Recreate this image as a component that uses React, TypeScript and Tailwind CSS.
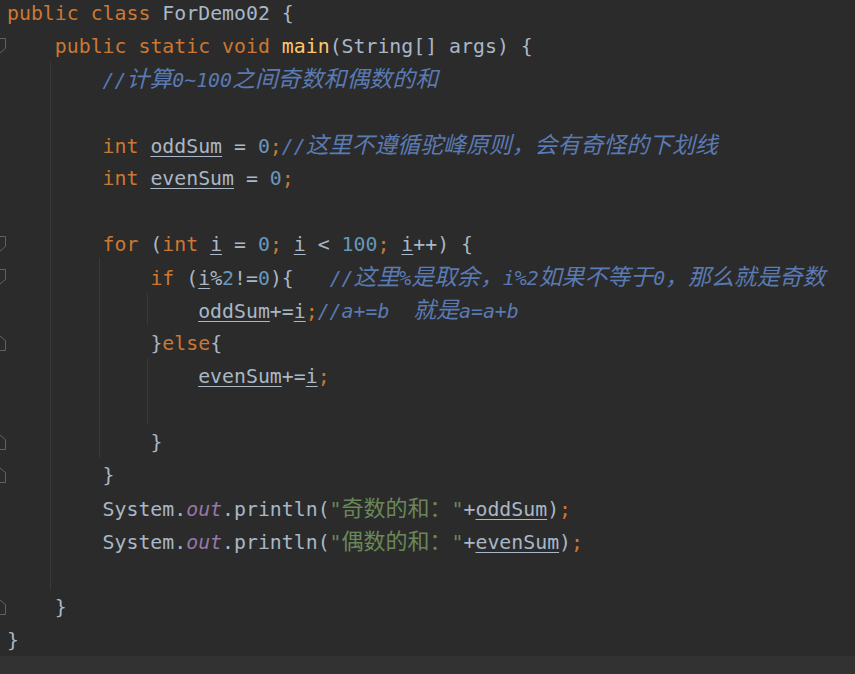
import React from "react";

type Tok = [string, string];

const CJK = /([\u3000-\u303f\u4e00-\u9fff\uff00-\uffef]+)/;

const cls: Record<string, string> = {
  k: "text-[#CC7832]",
  p: "text-[#A9B7C6]",
  n: "text-[#6897BB]",
  c: "text-[#5a7ab3] italic",
  s: "text-[#6A8759]",
  m: "text-[#FFC66D]",
  f: "text-[#9876AA] italic",
  u: "text-[#A9B7C6] underline decoration-[#A9B7C6] underline-offset-[3px] decoration-1",
};

function Run({ type, text }: { type: string; text: string }) {
  const parts = text.split(CJK).filter((x) => x.length > 0);
  return (
    <span className={cls[type]}>
      {parts.map((part, i) =>
        CJK.test(part) ? (
          <span
            key={i}
            className={
              type === "s"
                ? "font-['Noto_Sans_CJK_SC',sans-serif] text-[22px]"
                : "font-['Noto_Sans_CJK_SC',sans-serif] text-[22.9px]"
            }
          >
            {part}
          </span>
        ) : (
          <span key={i}>{part}</span>
        )
      )}
    </span>
  );
}

const ind = (n: number): Tok => ["p", " ".repeat(n)];

const lines: Tok[][] = [
  [["k", "public"], ["p", " "], ["k", "class"], ["p", " ForDemo02 {"]],
  [ind(4), ["k", "public"], ["p", " "], ["k", "static"], ["p", " "], ["k", "void"], ["p", " "], ["m", "main"], ["p", "(String[] args) {"]],
  [ind(8), ["c", "//计算0~100之间奇数和偶数的和"]],
  [],
  [ind(8), ["k", "int"], ["p", " "], ["u", "oddSum"], ["p", " = "], ["n", "0"], ["k", ";"], ["c", "//这里不遵循驼峰原则，会有奇怪的下划线"]],
  [ind(8), ["k", "int"], ["p", " "], ["u", "evenSum"], ["p", " = "], ["n", "0"], ["k", ";"]],
  [],
  [ind(8), ["k", "for"], ["p", " ("], ["k", "int"], ["p", " "], ["u", "i"], ["p", " = "], ["n", "0"], ["k", ";"], ["p", " "], ["u", "i"], ["p", " < "], ["n", "100"], ["k", ";"], ["p", " "], ["u", "i"], ["p", "++) {"]],
  [ind(12), ["k", "if"], ["p", " ("], ["u", "i"], ["p", "%"], ["n", "2"], ["p", "!="], ["n", "0"], ["p", "){   "], ["c", "//这里%是取余，i%2如果不等于0，那么就是奇数"]],
  [ind(16), ["u", "oddSum"], ["p", "+="], ["u", "i"], ["k", ";"], ["c", "//a+=b  就是a=a+b"]],
  [ind(12), ["p", "}"], ["k", "else"], ["p", "{"]],
  [ind(16), ["u", "evenSum"], ["p", "+="], ["u", "i"], ["k", ";"]],
  [],
  [ind(12), ["p", "}"]],
  [ind(8), ["p", "}"]],
  [ind(8), ["p", "System."], ["f", "out"], ["p", ".println("], ["s", "\"奇数的和：\""], ["p", "+"], ["u", "oddSum"], ["p", ")"], ["k", ";"]],
  [ind(8), ["p", "System."], ["f", "out"], ["p", ".println("], ["s", "\"偶数的和：\""], ["p", "+"], ["u", "evenSum"], ["p", ")"], ["k", ";"]],
  [],
  [ind(4), ["p", "}"]],
  [["p", "}"]],
];

// fold markers: line index (0-based) -> "open" | "close"
const folds: Record<number, "open" | "close"> = {
  1: "open",
  7: "open",
  8: "open",
  10: "close",
  13: "close",
  14: "close",
  18: "close",
};

function FoldMark({ kind }: { kind: "open" | "close" }) {
  return (
    <svg
      width="12"
      height="16"
      viewBox="0 0 12 16"
      className="absolute left-[-6px] top-[8px]"
      fill="none"
      stroke="#5f6162"
      strokeWidth="1"
    >
      {kind === "open" ? (
        <path d="M0.5 0.5 H11.5 V10.5 L6 15 L0.5 10.5 Z" />
      ) : (
        <path d="M0.5 15.5 H11.5 V5.5 L6 1 L0.5 5.5 Z" />
      )}
    </svg>
  );
}

export default function App() {
  return (
    <div className="relative w-[855px] h-[674px] overflow-hidden bg-[#2b2b2b] flex flex-col">
      <div className="relative flex-1 overflow-hidden">
        {/* indent guides (overlay decorations) */}
        <div className="absolute left-[50px] top-[62px] h-[528px] w-px bg-[#393939]" />
        <div className="absolute left-[99px] top-[258px] h-[200px] w-px bg-[#393939]" />
        <div className="absolute left-[147px] top-[293px] h-[32px] w-px bg-[#393939]" />
        <div className="absolute left-[147px] top-[358px] h-[67px] w-px bg-[#393939]" />
        <div className="mt-[-3.5px] flex flex-col font-['DejaVu_Sans_Mono',monospace] text-[19.85px]">
          {lines.map((toks, li) => (
            <div
              key={li}
              className="relative h-[33px] leading-[33px] whitespace-pre pl-[7px] flex items-center"
            >
              {folds[li] ? <FoldMark kind={folds[li]} /> : null}
              <span className="whitespace-pre">
                {toks.map((t, ti) => (
                  <Run key={ti} type={t[0]} text={t[1]} />
                ))}
              </span>
            </div>
          ))}
        </div>
      </div>
      <div className="h-[18px] shrink-0 bg-[#323232]" />
    </div>
  );
}
